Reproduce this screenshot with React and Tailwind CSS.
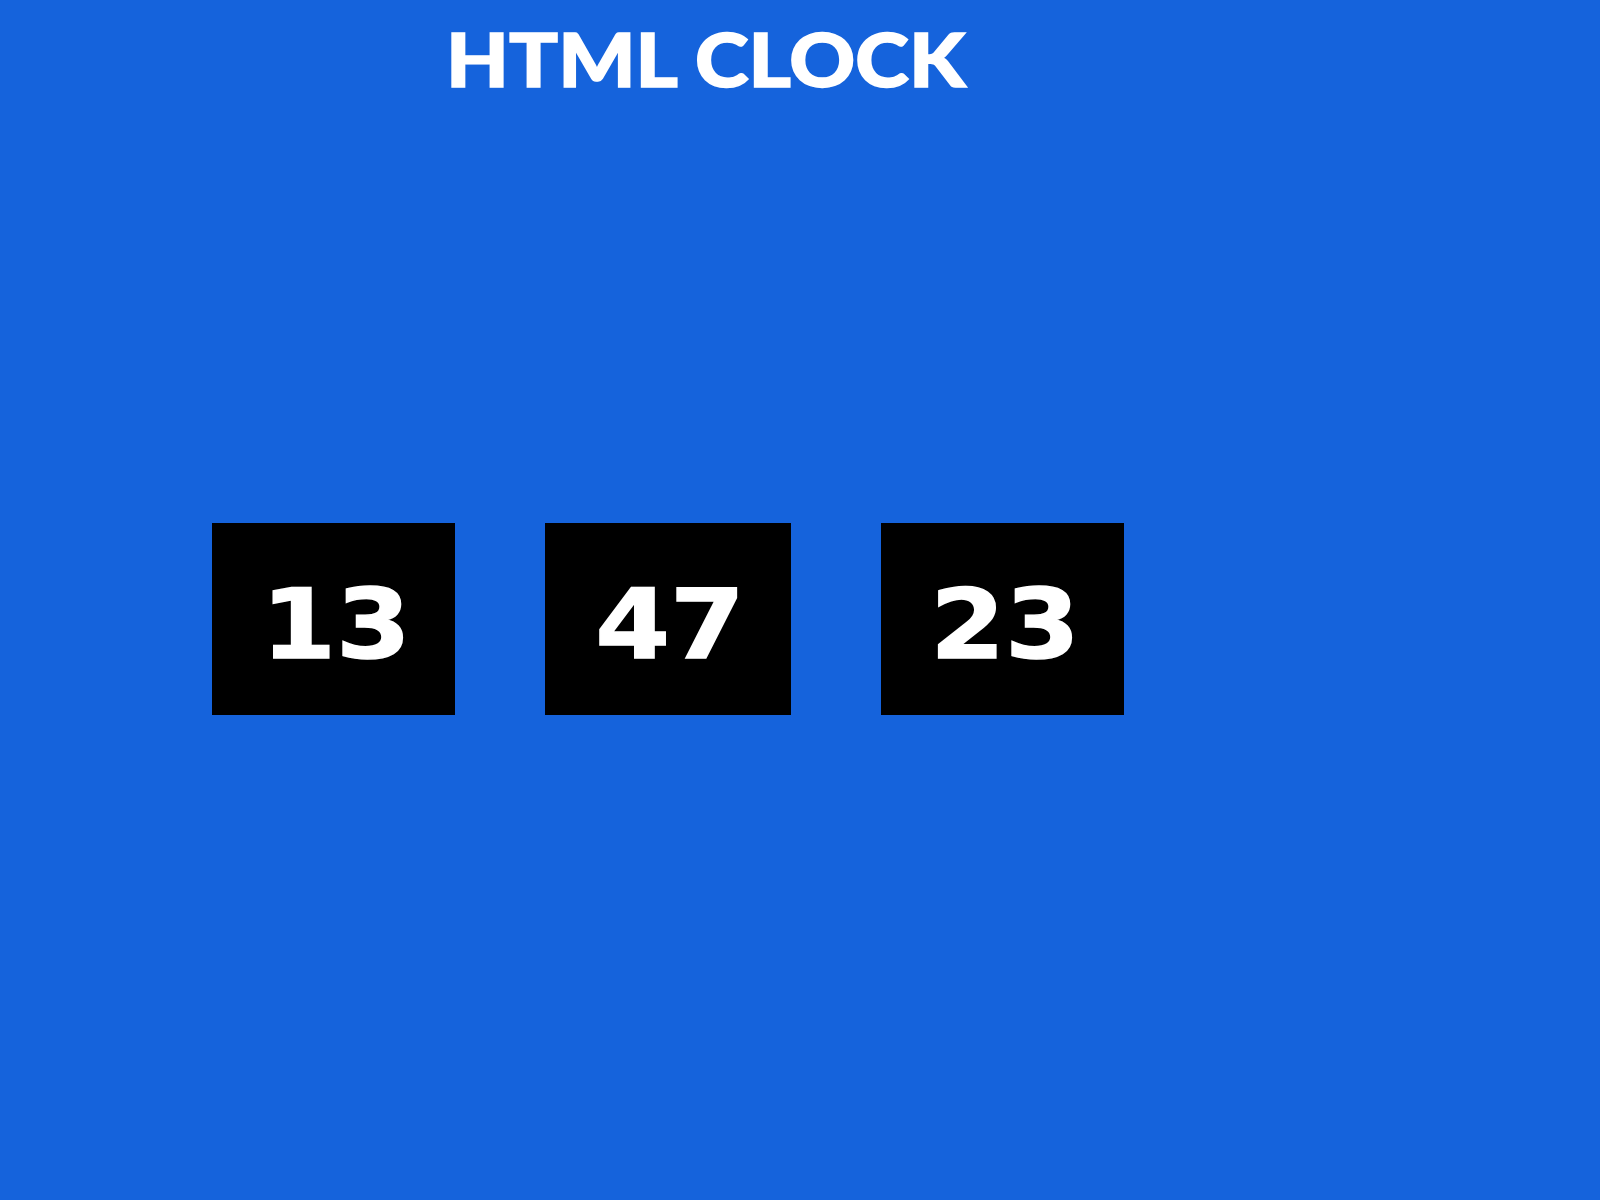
export default function App() {
  const parts = ["13", "47", "23"];
  return (
    <div className="min-h-[1200px] w-full bg-[#1563dc] overflow-hidden">
      <div className="pl-[446px] pt-[14px]">
        <h1
          className="inline-block origin-left scale-x-[1.1] text-[74px] leading-[90px] font-black text-white whitespace-nowrap [-webkit-text-stroke:1.5px_white]"
          style={{ fontFamily: "Lato, 'Open Sans', sans-serif" }}
        >
          HTML CLOCK
        </h1>
      </div>
      <div className="flex gap-[90px] pl-[212px] mt-[419px]">
        {parts.map((p, i) => (
          <div
            key={i}
            className={`${i === 1 ? "w-[246px]" : "w-[243px]"} h-[192px] bg-black flex items-center justify-center`}
          >
            <span
              className="inline-block scale-x-[1.12] text-white font-bold text-[96px] leading-none pt-[12px] pl-[4px] [-webkit-text-stroke:1.5px_white]"
              style={{ fontFamily: "'DejaVu Sans', Verdana, sans-serif" }}
            >
              {p}
            </span>
          </div>
        ))}
      </div>
    </div>
  );
}
